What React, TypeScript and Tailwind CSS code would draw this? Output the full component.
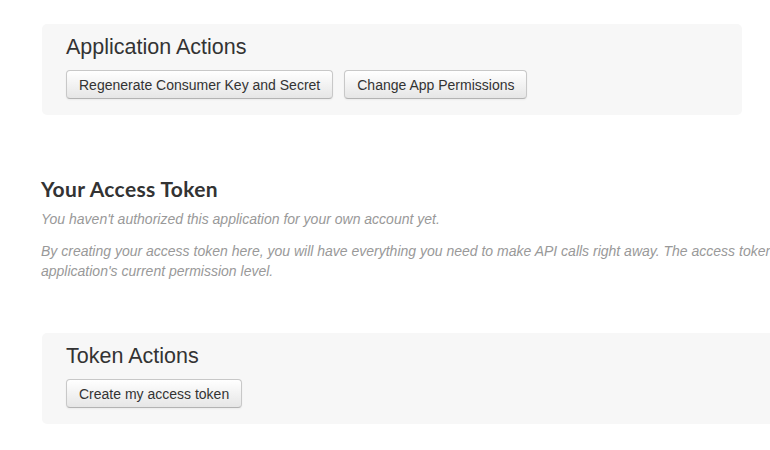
import React from "react";

const sans = "font-['Liberation_Sans',Arial,sans-serif]";

function ActionButton({ label }: { label: string }) {
  return (
    <button
      className={`${sans} h-[29px] px-3 flex items-center text-[14px] leading-[20px] text-[#333] rounded-[4px] border border-[#c8c8c8] border-b-[#b3b3b3] bg-gradient-to-b from-white to-[#e6e6e6] shadow-[inset_0_1px_0_rgba(255,255,255,0.2),0_1px_2px_rgba(0,0,0,0.05)]`}
    >
      {label}
    </button>
  );
}

function ActionBox({
  title,
  buttons,
  width,
}: {
  title: string;
  buttons: string[];
  width: string;
}) {
  return (
    <div className={`${width} ml-px bg-[#f7f7f7] rounded-[5px] pt-[11px] pb-4 px-6`}>
      <h3 className={`${sans} text-[21.5px] leading-[24px] text-[#333]`}>{title}</h3>
      <div className="mt-[11px] flex gap-[11px]">
        {buttons.map((b) => (
          <ActionButton key={b} label={b} />
        ))}
      </div>
    </div>
  );
}

export default function App() {
  return (
    <div className="w-[770px] h-[450px] overflow-hidden bg-white">
      <div className="w-[1001px] pl-[41px] pt-6">
        {/* Application actions */}
        <ActionBox
          width="w-[700px]"
          title="Application Actions"
          buttons={["Regenerate Consumer Key and Secret", "Change App Permissions"]}
        />

        {/* Access token */}
        <h2 className="mt-[62px] font-['Lato',sans-serif] font-bold text-[21px] leading-[24px] tracking-[0.35px] text-[#333]">
          Your Access Token
        </h2>
        <p className={`${sans} mt-2 italic text-[14px] leading-[20px] text-[#999]`}>
          You haven't authorized this application for your own account yet.
        </p>
        <p className={`${sans} mt-3 italic text-[14px] leading-[20px] text-[#999]`}>
          By creating your access token here, you will have everything you need to make API calls
          right away. The access token generated will be assigned your application's current
          permission level.
        </p>

        {/* Token actions */}
        <div className="mt-[52px]">
          <ActionBox width="w-[920px]" title="Token Actions" buttons={["Create my access token"]} />
        </div>
      </div>
    </div>
  );
}
